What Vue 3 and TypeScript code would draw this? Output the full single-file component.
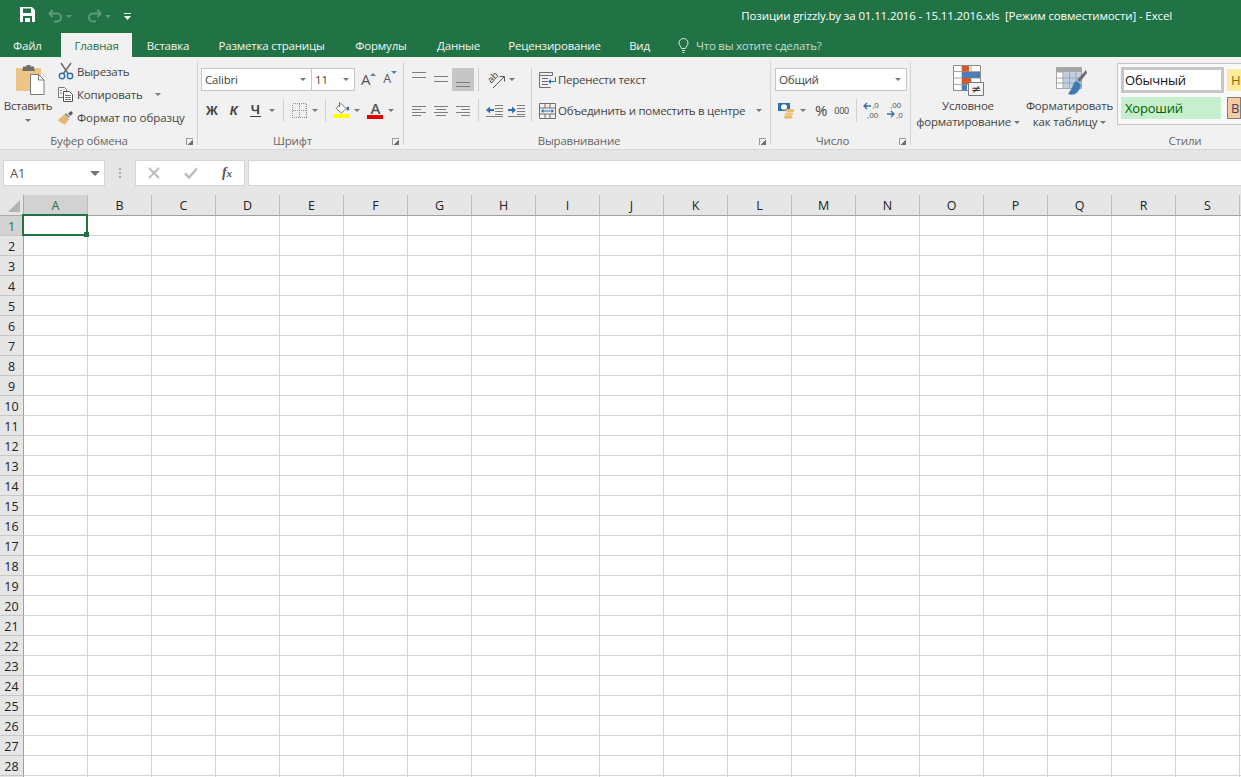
<script setup lang="ts">
const docTitle = 'Позиции grizzly.by за 01.11.2016 - 15.11.2016.xls  [Режим совместимости] - Excel'
const tabs = [
  { label: 'Вставка', width: 72 },
  { label: 'Разметка страницы', width: 135 },
  { label: 'Формулы', width: 84 },
  { label: 'Данные', width: 71 },
  { label: 'Рецензирование', width: 121 },
  { label: 'Вид', width: 49 }
]
const columns = 'ABCDEFGHIJKLMNOPQRS'.split('').concat('T')
const rows = Array.from({ length: 29 }, (_, i) => i + 1)
</script>

<template>
  <div class="excel">
    <header class="titlebar">
      <div class="qat">
        <svg class="qat-save" width="15" height="15" viewBox="0 0 15 15">
          <path d="M0 0h12l3 3v12H0z" fill="#fff" />
          <path d="M3 1.500h8v4.500H3zM3 9h9v6H3z" fill="#217346" />
          <path d="M5 11h5v4H5z" fill="#fff" />
        </svg>
        <svg class="qat-undo" width="15" height="13" viewBox="0 0 15 13">
          <path d="M4.500 1 1.500 4.500 4.500 8M2 4.500h7a4 4 0 0 1 0 8H6" fill="none" stroke="#5c9a7a" stroke-width="2" />
        </svg>
        <i class="caret dim" />
        <svg class="qat-redo" width="15" height="13" viewBox="0 0 15 13">
          <path d="M10.500 1l3 3.500-3 3.500M13 4.500H6a4 4 0 0 0 0 8h3" fill="none" stroke="#5c9a7a" stroke-width="2" />
        </svg>
        <i class="caret dim" />
        <svg class="qat-more" width="7" height="7" viewBox="0 0 7 7">
          <path d="M0 0h7v1H0z M0 3h7L3.500 7z" fill="#fff" />
        </svg>
      </div>
      <div class="doc-title">{{ docTitle }}</div>
    </header>

    <nav class="tabs">
      <span class="tab file">Файл</span>
      <span class="tab active">Главная</span>
      <span v-for="t in tabs" :key="t.label" class="tab" :style="{ width: t.width + 'px' }">{{ t.label }}</span>
      <span class="tell-me">
        <svg width="11" height="15" viewBox="0 0 11 15">
          <path d="M3.500 10.500C3.200 8.500 1 7.500 1 5a4.500 4.500 0 0 1 9 0c0 2.500-2.200 3.500-2.500 5.500zM4 12.500h3M4.500 14.500h2" fill="none" stroke="#e3eee8" />
        </svg>
        Что вы хотите сделать?
      </span>
    </nav>

    <section class="ribbon">
      <!-- Буфер обмена -->
      <div class="group g-clip">
        <div class="group-body clip-body">
          <div class="paste">
            <svg width="30" height="30" viewBox="0 0 30 30">
              <path d="M1 3h25v23H1z" fill="#edc587" />
              <path d="M8 3V1.500h3.500V0h4v1.500H19V3l1 3H7z" fill="#6f6f6f" />
              <path d="M15.500 9.500h8l5.500 5.500v14.500H15.500z" fill="#fff" stroke="#7a7a7a" />
              <path d="M23.500 9.500V15H29" fill="none" stroke="#7a7a7a" />
            </svg>
            <span class="paste-label">Вставить</span>
            <i class="caret" />
          </div>
          <div class="clip-list">
            <div class="clip-row">
              <svg width="16" height="17" viewBox="0 0 16 17">
                <path d="M3 0l7 10.500M13 0 5.500 10.500" stroke="#6d6d6d" stroke-width="1.500" fill="none" />
                <circle cx="4" cy="13" r="2.700" fill="none" stroke="#2f6fb0" stroke-width="1.400" />
                <circle cx="12" cy="13" r="2.700" fill="none" stroke="#2f6fb0" stroke-width="1.400" />
              </svg>
              <span>Вырезать</span>
            </div>
            <div class="clip-row">
              <svg width="16" height="15" viewBox="0 0 16 15">
                <path d="M.500.500h6l2 2v8h-8z" fill="#f6f6f6" stroke="#777" />
                <path d="M5.500 4.500h6l3 3v7h-9z" fill="#fff" stroke="#555" />
                <path d="M7 8.500h6M7 10.500h6M7 12.500h6M2 3.500h2M2 6h2" stroke="#777" />
              </svg>
              <span>Копировать</span>
              <i class="caret copy-caret" />
            </div>
            <div class="clip-row format-row">
              <svg width="16" height="14" viewBox="0 0 16 14">
                <path d="M0 9 6 3.500l5 4.500-4 5.500C4 13 1.500 11 0 9z" fill="#e5b772" />
                <path d="M6.500 3.500 8 2l3.500 3.500L10.500 7z" fill="#8a8a8a" />
                <path d="M10 2.500 13 0l2 2-2.500 3z" fill="#5e5e5e" />
              </svg>
              <span>Формат по образцу</span>
            </div>
          </div>
        </div>
        <div class="group-label pr-19">Буфер обмена<i class="launcher" /></div>
      </div>
      <i class="group-sep" />

      <!-- Шрифт -->
      <div class="group g-font">
        <div class="group-body font-body">
          <div class="tool-row">
            <div class="combo font-name"><span>Calibri</span><i class="caret" /></div>
            <div class="combo font-size"><span>11</span><i class="caret" /></div>
            <span class="grow big">A<i class="tip up" /></span>
            <span class="grow small">A<i class="tip down" /></span>
          </div>
          <div class="tool-row second">
            <b class="fmt bold">Ж</b>
            <b class="fmt italic">К</b>
            <b class="fmt under">Ч</b>
            <i class="caret c-under" />
            <i class="sep s-a" />
            <svg class="borders" width="15" height="15" viewBox="0 0 15 15" shape-rendering="crispEdges">
              <path d="M.500.500h14v14H.500zM7.500.500v14M.500 7.500h14" fill="none" stroke="#8f8f8f" stroke-dasharray="1 1" />
            </svg>
            <i class="caret c-b" />
            <i class="sep s-b" />
            <div class="swatch-icon">
              <svg width="17" height="12" viewBox="0 0 17 12">
                <path d="M3 6.500 8 1.500l5 5-4.500 4.500z" fill="#fff" stroke="#777" />
                <path d="M6.500 0v5" stroke="#777" />
                <path d="M13.500 5.500l2.500-1v3.500a1.500 1.500 0 0 1-2.500-.500z" fill="#2f6fb0" />
              </svg>
              <i class="bar yellow" />
            </div>
            <i class="caret c-f" />
            <div class="swatch-icon a-color">
              <span>A</span>
              <i class="bar red" />
            </div>
            <i class="caret c-a" />
          </div>
        </div>
        <div class="group-label pr-16">Шрифт<i class="launcher" /></div>
      </div>
      <i class="group-sep" />

      <!-- Выравнивание -->
      <div class="group g-align">
        <div class="group-body align-body">
          <div class="align-tools">
            <div class="tool-row a-row1">
              <span class="a-btn">
                <svg width="14" height="23" viewBox="0 0 14 23"><path d="M0 4.500h14M0 9.500h14" stroke="#7d7d7d" fill="none" /></svg>
              </span>
              <span class="a-btn">
                <svg width="14" height="23" viewBox="0 0 14 23"><path d="M0 8.500h14M0 13.500h14" stroke="#7d7d7d" fill="none" /></svg>
              </span>
              <span class="a-btn on">
                <svg width="14" height="23" viewBox="0 0 14 23"><path d="M0 14.500h14M0 18.500h14" stroke="#7d7d7d" fill="none" /></svg>
              </span>
              <i class="sep s-c" />
              <svg class="orient" width="20" height="20" viewBox="0 0 20 20">
                <text x="2" y="10" class="orient-text" transform="rotate(-45 8 8)">ab</text>
                <path d="M7 18 18 7M13.500 6.500H18.500V11.500" fill="none" stroke="#555" />
              </svg>
              <i class="caret c-o" />
            </div>
            <div class="tool-row a-row2">
              <span class="a-btn">
                <svg width="14" height="12" viewBox="0 0 14 12"><path d="M0 1.500h14M0 4.500h9M0 7.500h14M0 10.500h9" stroke="#7d7d7d" fill="none" /></svg>
              </span>
              <span class="a-btn">
                <svg width="14" height="12" viewBox="0 0 14 12"><path d="M0 1.500h14M2 4.500h10M0 7.500h14M2 10.500h10" stroke="#7d7d7d" fill="none" /></svg>
              </span>
              <span class="a-btn">
                <svg width="14" height="12" viewBox="0 0 14 12"><path d="M0 1.500h14M5 4.500h9M0 7.500h14M5 10.500h9" stroke="#7d7d7d" fill="none" /></svg>
              </span>
              <i class="sep s-c" />
              <svg class="indent" width="17" height="13" viewBox="0 0 17 13">
                <path d="M9 1.500h8M9 4.500h8M9 7.500h8M9 10.500h8M0 12.500h17" stroke="#7d7d7d" fill="none" />
                <path d="M0 6l4-3.500V5h4v2H4v2.500z" fill="#2f6fb0" />
              </svg>
              <svg class="indent i2" width="17" height="13" viewBox="0 0 17 13">
                <path d="M9 1.500h8M9 4.500h8M9 7.500h8M9 10.500h8M0 12.500h17" stroke="#7d7d7d" fill="none" />
                <path d="M8 6 4 2.500V5H0v2h4v2.500z" fill="#2f6fb0" />
              </svg>
            </div>
          </div>
          <i class="sep s-wrap" />
          <div class="wrap-tools">
            <div class="wrap-row">
              <svg width="17" height="16" viewBox="0 0 17 16">
                <path d="M.500.500h13v3h-13zM.500 3.500v12h11M3 6.500h6M3 9.500h6M3 12.500h6" fill="none" stroke="#6f6f6f" />
                <path d="M16.500 5v4.500h-6" fill="none" stroke="#2f6fb0" />
                <path d="M9 9.500l3-2.500v5z" fill="#2f6fb0" />
              </svg>
              <span>Перенести текст</span>
            </div>
            <div class="wrap-row merge">
              <svg width="17" height="16" viewBox="0 0 17 16">
                <path d="M.500.500h16v15H.500zM.500 5h16M.500 11h16M6 .500V5M11 .500V5M6 11v4.500M11 11v4.500" fill="none" stroke="#6f6f6f" />
                <path d="M3 8h11" stroke="#2f6fb0" />
                <path d="M2 8l2.500-2v4zM15 8l-2.500-2v4z" fill="#2f6fb0" />
              </svg>
              <span>Объединить и поместить в центре</span>
              <i class="caret c-merge" />
            </div>
          </div>
        </div>
        <div class="group-label pr-16">Выравнивание<i class="launcher" /></div>
      </div>
      <i class="group-sep" />

      <!-- Число -->
      <div class="group g-num">
        <div class="group-body num-body">
          <div class="combo num-format"><span>Общий</span><i class="caret" /></div>
          <div class="tool-row second num-row">
            <svg class="money" width="18" height="18" viewBox="0 0 18 18">
              <path d="M1 2h12v8H1z" fill="#2f6fb0" />
              <ellipse cx="7" cy="6" rx="3" ry="2.800" fill="#fff" />
              <ellipse cx="13" cy="9.500" rx="4.500" ry="1.800" fill="#e8bd70" />
              <ellipse cx="12" cy="13" rx="4.500" ry="1.800" fill="#edc98a" />
              <ellipse cx="11" cy="16" rx="4.500" ry="1.800" fill="#e8bd70" />
            </svg>
            <i class="caret c-money" />
            <span class="percent">%</span>
            <span class="thousand">000</span>
            <i class="sep s-n" />
            <svg class="dec" width="17" height="18" viewBox="0 0 17 18">
              <text x="8" y="7" class="dec-text">,0</text>
              <text x="3" y="17" class="dec-text">,00</text>
              <path d="M0 5h7M3 2 0 5l3 3" fill="none" stroke="#2f6fb0" stroke-width="1.300" />
            </svg>
            <svg class="dec d2" width="17" height="18" viewBox="0 0 17 18">
              <text x="4" y="7" class="dec-text">,00</text>
              <text x="10" y="17" class="dec-text">,0</text>
              <path d="M1 13h7M5 10l3 3-3 3" fill="none" stroke="#2f6fb0" stroke-width="1.300" />
            </svg>
          </div>
        </div>
        <div class="group-label pr-16">Число<i class="launcher" /></div>
      </div>
      <i class="group-sep" />

      <!-- Стили -->
      <div class="group g-styles">
        <div class="group-body styles-body">
          <div class="big-btn b-cf">
            <svg width="31" height="31" viewBox="0 0 31 31">
              <path d="M.500.500h27v25H.500z" fill="#fff" stroke="#8a8a8a" />
              <path d="M.500 6.500h27M.500 13h27M.500 19.500h27M9 .500v25M18 .500v25" stroke="#a6a6a6" fill="none" />
              <path d="M9 1h7v5.500H9zM9 13h9v6H9z" fill="#d2592a" />
              <path d="M9 7h18v6H9zM9 19.500h5v6H9z" fill="#4c7fb8" />
              <path d="M15.500 17.500h15v13h-15z" fill="#f4f4f4" stroke="#777" />
              <text x="23" y="28" class="ne">≠</text>
            </svg>
            <span class="big-label l-cf">Условное<br />форматирование <i class="caret inline" /></span>
          </div>
          <div class="big-btn b-tbl">
            <svg width="31" height="29" viewBox="0 0 31 29">
              <path d="M.500.500h25v21H.500z" fill="#fff" stroke="#a6a6a6" />
              <path d="M.500.500h25v5h-25z" fill="#a6a6a6" />
              <path d="M7 6h18v15H7z" fill="#bcd0e6" />
              <path d="M.500 11h25M.500 16h25M7 .500v21M13.500 .500v21M20 .500v21" stroke="#a6a6a6" fill="none" />
              <path d="M30 3 21 13l3 2 7-9z" fill="#6e6e6e" />
              <path d="M21 14c-4 1-4 5-5 7l-4 6c5 2 11 0 13-9z" fill="#3f7ab8" />
            </svg>
            <span class="big-label l-tbl">Форматировать<br />как таблицу <i class="caret inline" /></span>
          </div>
          <div class="gallery">
            <div class="st normal">Обычный</div>
            <div class="st neutral">Нейтральный</div>
            <div class="st good">Хороший</div>
            <div class="st output">Вывод</div>
          </div>
        </div>
        <div class="group-label styles-label">Стили</div>
      </div>
    </section>

    <section class="formula-bar">
      <div class="name-box"><span>A1</span><i class="caret dark" /></div>
      <i class="dots" />
      <div class="fx-box">
        <svg width="12" height="12" viewBox="0 0 12 12"><path d="M1 1l10 10M11 1 1 11" stroke="#bdbdbd" stroke-width="2" /></svg>
        <svg width="14" height="12" viewBox="0 0 14 12"><path d="M1 6.500 5 10.500 13 1.500" stroke="#bdbdbd" stroke-width="2.500" fill="none" /></svg>
        <span class="fx">f<small>x</small></span>
      </div>
      <div class="formula-input" />
    </section>

    <section class="sheet">
      <div class="corner"><i /></div>
      <div v-for="c in columns" :key="c" class="col-head" :class="{ selected: c === 'A' }">{{ c === 'T' ? '' : c }}</div>
      <template v-for="r in rows" :key="r">
        <div class="row-head" :class="{ selected: r === 1 }">{{ r === 29 ? '' : r }}</div>
        <div v-for="c in columns" :key="c + r" class="cell">
          <div v-if="r === 1 && c === 'A'" class="cursor"><i /></div>
        </div>
      </template>
    </section>
  </div>
</template>

<style>
html,
body {
  margin: 0;
  background: #fff;
}
</style>

<style scoped>
.excel {
  width: 1241px;
  height: 777px;
  overflow: hidden;
  display: flex;
  flex-direction: column;
  font-family: 'Open Sans', 'Noto Sans', sans-serif;
  font-size: 11.5px;
  letter-spacing: -0.2px;
  color: #444;
}
i {
  display: block;
  flex: none;
}
svg {
  flex: none;
  overflow: visible;
}

/* title bar */
.titlebar {
  height: 33px;
  flex: none;
  background: #217346;
  display: flex;
  align-items: center;
  color: #fff;
}
.qat {
  display: flex;
  align-items: center;
  padding-left: 20px;
}
.qat-save {
  margin-top: -5px;
}
.qat-undo {
  margin: -3px 3px 0 13px;
}
.qat-redo {
  margin: -3px 3px 0 15px;
}
.qat-more {
  margin: -1px 0 0 13px;
}
.doc-title {
  margin: -2px 0 0 auto;
  padding-right: 69px;
  white-space: pre;
  letter-spacing: -0.13px;
}

/* tabs */
.tabs {
  height: 24px;
  flex: none;
  background: #217346;
  display: flex;
  align-items: stretch;
  color: #f2f7f4;
}
.tab {
  display: flex;
  align-items: center;
  justify-content: center;
  padding-top: 1px;
  box-sizing: border-box;
  white-space: nowrap;
}
.tab.file {
  width: 61px;
  justify-content: flex-start;
  padding-left: 13px;
}
.tab.active {
  width: 71px;
  background: #f1f1f1;
  color: #217346;
}
.tell-me {
  margin-left: 14px;
  display: flex;
  align-items: center;
  gap: 7px;
  color: #c6dccf;
  white-space: nowrap;
  letter-spacing: -0.25px;
}

/* ribbon */
.ribbon {
  height: 93px;
  flex: none;
  display: flex;
  background: #f1f1f1;
  border-bottom: 1px solid #d6d6d6;
  box-sizing: border-box;
}
.group {
  flex: none;
  display: flex;
  flex-direction: column;
}
.group-body {
  height: 76px;
  flex: none;
  box-sizing: border-box;
}
.group-label {
  position: relative;
  height: 16px;
  line-height: 16px;
  text-align: center;
  color: #666;
}
.group-sep {
  width: 1px;
  margin: 5px 0 4px;
  background: #d4d4d4;
}
.pr-19 {
  padding-right: 19px;
}
.pr-16 {
  padding-right: 16px;
}
.launcher {
  position: absolute;
  right: 4px;
  top: 5px;
  width: 6px;
  height: 6px;
  border: 1px solid #9a9a9a;
  border-width: 1px 0 0 1px;
  background: linear-gradient(135deg, transparent 55%, #6f6f6f 55%);
}
.caret {
  width: 0;
  height: 0;
  border-left: 3px solid transparent;
  border-right: 3px solid transparent;
  border-top: 3px solid #777;
}
.caret.dim {
  border-top-color: #5c9a7a;
}
.caret.dark {
  border-left-width: 5px;
  border-right-width: 5px;
  border-top: 5px solid #777;
}
.caret.inline {
  display: inline-block;
  vertical-align: 2px;
}
.sep {
  width: 1px;
  height: 23px;
  background: #d0d0d0;
}
.tool-row {
  display: flex;
  align-items: center;
}

/* clipboard */
.g-clip {
  width: 197px;
}
.clip-body {
  display: flex;
  padding-top: 3px;
}
.paste {
  width: 56px;
  flex: none;
  display: flex;
  flex-direction: column;
  align-items: center;
  padding: 5px 0 0 3px;
  box-sizing: border-box;
}
.paste-label {
  margin: 3px 0 0 -3px;
  line-height: 16px;
  letter-spacing: -0.3px;
}
.paste .caret {
  margin: 5px 0 0 -3px;
}
.clip-row {
  height: 23px;
  display: flex;
  align-items: center;
  gap: 3px;
  padding-left: 2px;
  white-space: nowrap;
}
.clip-row svg {
  width: 16px;
}
.format-row {
  letter-spacing: -0.08px;
}
.copy-caret {
  margin-left: 9px;
}

/* font */
.g-font {
  width: 205px;
}
.font-body {
  padding: 11px 0 0 3px;
}
.combo {
  height: 23px;
  box-sizing: border-box;
  background: #fff;
  border: 1px solid #c6c6c6;
  display: flex;
  align-items: center;
  justify-content: space-between;
  padding: 0 5px 0 3px;
}
.font-name {
  width: 111px;
}
.font-size {
  width: 44px;
  margin-left: -1px;
}
.grow {
  position: relative;
  color: #555;
  line-height: 1;
}
.grow.big {
  font-size: 15px;
  margin-left: 6px;
}
.grow.small {
  font-size: 12.500px;
  margin-left: 13px;
}
.tip {
  position: absolute;
  top: 1px;
  right: -6px;
  width: 0;
  height: 0;
  border-left: 3px solid transparent;
  border-right: 3px solid transparent;
}
.tip.up {
  border-bottom: 3px solid #4c7fb8;
}
.tip.down {
  border-top: 3px solid #4c7fb8;
  top: -2px;
}
.second {
  margin-top: 9px;
  height: 20px;
}
.fmt {
  font-family: 'Liberation Sans', sans-serif;
  font-size: 13px;
  color: #444;
  letter-spacing: 0;
}
.bold {
  margin-left: 5px;
}
.italic {
  font-style: italic;
  margin-left: 12px;
}
.under {
  margin-left: 12px;
  border-bottom: 1px solid #444;
  line-height: 13px;
  padding: 0 1px;
}
.c-under {
  margin-left: 8px;
}
.s-a {
  margin-left: 8px;
}
.borders {
  margin-left: 8px;
}
.c-b {
  margin-left: 5px;
}
.s-b {
  margin-left: 7px;
}
.swatch-icon {
  margin-left: 7px;
  width: 17px;
  display: flex;
  flex-direction: column;
  align-items: center;
}
.bar {
  width: 16px;
  height: 4px;
}
.yellow {
  background: #ffff00;
}
.red {
  background: #e00000;
}
.c-f {
  margin-left: 4px;
}
.a-color {
  margin-left: 7px;
}
.a-color span {
  font-size: 15px;
  line-height: 13px;
  font-weight: 600;
  color: #555;
}
.c-a {
  margin-left: 4px;
}

/* alignment */
.g-align {
  width: 366px;
}
.align-body {
  display: flex;
  padding: 11px 0 0 4px;
}
.align-tools {
  width: 123px;
  flex: none;
}
.a-btn {
  width: 22px;
  height: 23px;
  display: flex;
  align-items: center;
  justify-content: center;
}
.a-btn.on {
  background: #c6c6c6;
}
.a-row2 {
  margin-top: 8px;
  height: 23px;
}
.s-c {
  margin-left: 4px;
}
.orient {
  margin-left: 7px;
}
.orient-text {
  font-size: 10px;
  fill: #555;
  font-family: 'Liberation Sans', sans-serif;
}
.c-o {
  margin-left: 3px;
}
.indent {
  margin-left: 7px;
}
.indent.i2 {
  margin-left: 5px;
}
.s-wrap {
  height: 54px;
}
.wrap-tools {
  margin-left: 7px;
}
.wrap-row {
  height: 23px;
  display: flex;
  align-items: center;
  gap: 2px;
  white-space: nowrap;
  letter-spacing: -0.28px;
}
.wrap-row.merge {
  margin-top: 8px;
}
.c-merge {
  margin-left: 9px;
}

/* number */
.g-num {
  width: 139px;
}
.num-body {
  padding: 11px 0 0 4px;
}
.num-format {
  width: 132px;
}
.money {
  margin-left: 2px;
}
.c-money {
  margin-left: 5px;
}
.percent {
  margin-left: 9px;
  font-size: 15px;
}
.thousand {
  margin-left: 7px;
  font-size: 9px;
}
.s-n {
  margin-left: 7px;
}
.dec {
  margin-left: 7px;
}
.dec.d2 {
  margin-left: 5px;
}
.dec-text {
  font-size: 8px;
  fill: #555;
  font-family: 'Liberation Sans', sans-serif;
  letter-spacing: 0;
}

/* styles */
.g-styles {
  width: 330px;
}
.styles-body {
  display: flex;
  padding: 6px 0 0;
}
.big-btn {
  flex: none;
  display: flex;
  flex-direction: column;
  align-items: center;
}
.b-cf {
  width: 114px;
  padding-top: 2px;
}
.b-tbl {
  width: 92px;
  padding-top: 4px;
}
.big-label {
  text-align: center;
  line-height: 16px;
  white-space: nowrap;
}
.l-cf {
  margin-top: 2px;
}
.l-tbl {
  margin: 2px 3px 0 0;
}
.gallery {
  flex: 1;
  min-width: 0;
  height: 62px;
  box-sizing: border-box;
  border: 1px solid #c6c6c6;
  border-right: 0;
  background: #f8f8f8;
  display: grid;
  grid-template-columns: 103px 1fr;
  grid-template-rows: 26px 22px;
  gap: 4px 3px;
  padding: 3px 0 0 3px;
  overflow: hidden;
}
.st {
  display: flex;
  align-items: center;
  font-size: 13px;
  padding-left: 4px;
  white-space: nowrap;
  overflow: hidden;
  box-sizing: border-box;
}
.normal {
  background: #fff;
  border: 3px solid #c6c6c6;
  color: #111;
  padding-left: 1px;
}
.neutral {
  background: #ffeb9c;
  color: #9c6500;
  height: 22px;
  margin-top: 2px;
}
.good {
  background: #c6efce;
  color: #006100;
  width: 100px;
}
.output {
  background: #f4cca0;
  border: 1px solid #7f7f7f;
  color: #3f3f76;
  padding-left: 3px;
}
.styles-label {
  padding-left: 218px;
}

/* formula bar */
.formula-bar {
  height: 45px;
  flex: none;
  background: #e6e6e6;
  display: flex;
  align-items: flex-start;
  padding: 10px 0 0 3px;
  box-sizing: border-box;
}
.name-box,
.fx-box,
.formula-input {
  height: 26px;
  box-sizing: border-box;
  background: #fff;
  border: 1px solid #d4d4d4;
  display: flex;
  align-items: center;
}
.name-box {
  width: 102px;
  justify-content: space-between;
  padding: 0 4px 0 6px;
  font-size: 13px;
  color: #555;
}
.dots {
  width: 2px;
  height: 10px;
  margin: 8px 14px 0 14px;
  background: repeating-linear-gradient(#a8a8a8 0 2px, transparent 2px 4px);
}
.fx-box {
  width: 110px;
  padding-left: 12px;
  gap: 24px;
}
.fx {
  font-family: 'Liberation Serif', serif;
  font-style: italic;
  font-weight: 700;
  font-size: 14px;
  color: #555;
}
.fx small {
  font-size: 11px;
}
.formula-input {
  flex: 1;
  margin-left: 3px;
  border-right: 0;
}

/* sheet */
.sheet {
  flex: 1;
  min-height: 0;
  overflow: hidden;
  background: #fff;
  display: grid;
  grid-template-columns: 24px repeat(20, 64px);
  grid-template-rows: 21px;
  grid-auto-rows: 20px;
}
.corner {
  background: #e6e6e6;
  border-right: 1px solid #ababab;
  border-bottom: 1px solid #ababab;
  box-sizing: border-box;
  position: relative;
}
.corner i {
  position: absolute;
  right: 3px;
  bottom: 3px;
  width: 0;
  height: 0;
  border-left: 12px solid transparent;
  border-bottom: 12px solid #b4b4b4;
}
.col-head,
.row-head {
  display: flex;
  align-items: center;
  justify-content: center;
  padding-top: 1px;
  background: #e6e6e6;
  box-sizing: border-box;
  color: #222;
  font-size: 12.500px;
  letter-spacing: 0;
}
.col-head {
  border-right: 1px solid #bcbcbc;
  border-bottom: 1px solid #9f9f9f;
}
.row-head {
  border-right: 1px solid #9f9f9f;
  border-bottom: 1px solid #c6c6c6;
}
.col-head.selected,
.row-head.selected {
  background: #d2d2d2;
  color: #217346;
}
.cell {
  position: relative;
  box-sizing: border-box;
  border-right: 1px solid #d4d4d4;
  border-bottom: 1px solid #d4d4d4;
}
.cursor {
  position: absolute;
  inset: -2px -1px -1px -2px;
  border: 2px solid #217346;
  z-index: 1;
}
.cursor i {
  position: absolute;
  right: -3px;
  bottom: -3px;
  width: 5px;
  height: 5px;
  background: #217346;
}
.ne {
  font-size: 12px;
  fill: #333;
  text-anchor: middle;
  font-family: 'DejaVu Sans', sans-serif;
}
</style>
